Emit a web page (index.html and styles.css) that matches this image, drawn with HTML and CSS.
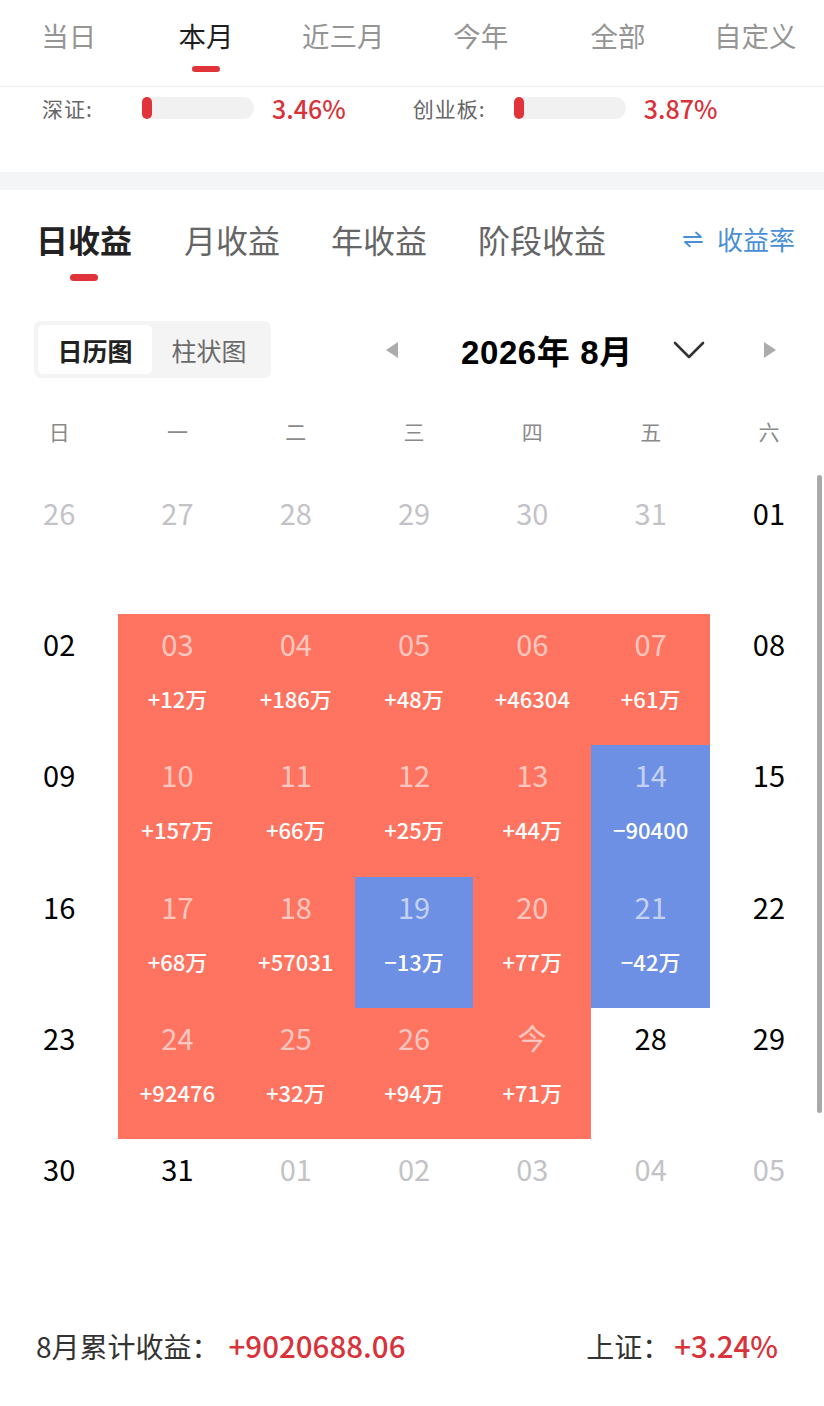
FILE: index.html
```html
<!DOCTYPE html>
<html lang="zh-CN">
<head>
<meta charset="utf-8">
<title>收益日历</title>
<link rel="stylesheet" href="styles.css">
</head>
<body>
<div class="page">
  <nav class="period-tabs">
    <div class="period-tab">当日</div>
    <div class="period-tab active">本月<span class="tab-line"></span></div>
    <div class="period-tab">近三月</div>
    <div class="period-tab">今年</div>
    <div class="period-tab">全部</div>
    <div class="period-tab">自定义</div>
  </nav>

  <div class="index-row">
    <div class="index-item">
      <span class="index-name">深证:</span>
      <span class="index-bar"><span class="index-fill"></span></span>
      <span class="index-val">3.46%</span>
    </div>
    <div class="index-item">
      <span class="index-name">创业板:</span>
      <span class="index-bar"><span class="index-fill"></span></span>
      <span class="index-val">3.87%</span>
    </div>
  </div>

  <div class="band"></div>

  <div class="profit-tabs">
    <div class="profit-tab active">日收益<span class="tab-line wide"></span></div>
    <div class="profit-tab">月收益</div>
    <div class="profit-tab">年收益</div>
    <div class="profit-tab">阶段收益</div>
    <div class="rate-link">
      <svg class="swap-icon" viewBox="0 0 22 16" width="22" height="16">
        <path d="M2 6 H19 L14 1.5" fill="none" stroke="#4a8fd6" stroke-width="1.8" stroke-linecap="round" stroke-linejoin="round"/>
        <path d="M20 11 H3 L8 15.5" fill="none" stroke="#4a8fd6" stroke-width="1.8" stroke-linecap="round" stroke-linejoin="round"/>
      </svg>
      <span>收益率</span>
    </div>
  </div>

  <div class="toolbar">
    <div class="toggle">
      <div class="toggle-item on">日历图</div>
      <div class="toggle-item">柱状图</div>
    </div>
    <div class="month-nav">
      <svg class="tri" viewBox="0 0 14 18" width="14" height="18"><path d="M13 1 L1 9 L13 17 Z" fill="#acacac"/></svg>
      <div class="month-title">2026年 8月</div>
      <svg class="chev" viewBox="0 0 32 20" width="32" height="20"><path d="M2 3 L16 17 L30 3" fill="none" stroke="#333" stroke-width="2.6" stroke-linecap="round" stroke-linejoin="round"/></svg>
      <svg class="tri" viewBox="0 0 14 18" width="14" height="18"><path d="M1 1 L13 9 L1 17 Z" fill="#acacac"/></svg>
    </div>
  </div>

  <div class="calendar">
    <div class="weekdays">
      <span>日</span><span>一</span><span>二</span><span>三</span><span>四</span><span>五</span><span>六</span>
    </div>
    <div class="days">
      <div class="day other"><span class="dn">26</span></div>
      <div class="day other"><span class="dn">27</span></div>
      <div class="day other"><span class="dn">28</span></div>
      <div class="day other"><span class="dn">29</span></div>
      <div class="day other"><span class="dn">30</span></div>
      <div class="day other"><span class="dn">31</span></div>
      <div class="day"><span class="dn">01</span></div>

      <div class="day"><span class="dn">02</span></div>
      <div class="day up"><span class="dn">03</span><span class="dv">+12万</span></div>
      <div class="day up"><span class="dn">04</span><span class="dv">+186万</span></div>
      <div class="day up"><span class="dn">05</span><span class="dv">+48万</span></div>
      <div class="day up"><span class="dn">06</span><span class="dv">+46304</span></div>
      <div class="day up"><span class="dn">07</span><span class="dv">+61万</span></div>
      <div class="day"><span class="dn">08</span></div>

      <div class="day"><span class="dn">09</span></div>
      <div class="day up"><span class="dn">10</span><span class="dv">+157万</span></div>
      <div class="day up"><span class="dn">11</span><span class="dv">+66万</span></div>
      <div class="day up"><span class="dn">12</span><span class="dv">+25万</span></div>
      <div class="day up"><span class="dn">13</span><span class="dv">+44万</span></div>
      <div class="day down"><span class="dn">14</span><span class="dv">−90400</span></div>
      <div class="day"><span class="dn">15</span></div>

      <div class="day"><span class="dn">16</span></div>
      <div class="day up"><span class="dn">17</span><span class="dv">+68万</span></div>
      <div class="day up"><span class="dn">18</span><span class="dv">+57031</span></div>
      <div class="day down"><span class="dn">19</span><span class="dv">−13万</span></div>
      <div class="day up"><span class="dn">20</span><span class="dv">+77万</span></div>
      <div class="day down"><span class="dn">21</span><span class="dv">−42万</span></div>
      <div class="day"><span class="dn">22</span></div>

      <div class="day"><span class="dn">23</span></div>
      <div class="day up"><span class="dn">24</span><span class="dv">+92476</span></div>
      <div class="day up"><span class="dn">25</span><span class="dv">+32万</span></div>
      <div class="day up"><span class="dn">26</span><span class="dv">+94万</span></div>
      <div class="day up"><span class="dn">今</span><span class="dv">+71万</span></div>
      <div class="day"><span class="dn">28</span></div>
      <div class="day"><span class="dn">29</span></div>

      <div class="day"><span class="dn">30</span></div>
      <div class="day"><span class="dn">31</span></div>
      <div class="day other"><span class="dn">01</span></div>
      <div class="day other"><span class="dn">02</span></div>
      <div class="day other"><span class="dn">03</span></div>
      <div class="day other"><span class="dn">04</span></div>
      <div class="day other"><span class="dn">05</span></div>
    </div>
  </div>

  <div class="summary">
    <div class="sum-left"><span class="sum-label">8月累计收益：</span><span class="sum-val">+9020688.06</span></div>
    <div class="sum-right"><span class="sum-label">上证：</span><span class="sum-val">+3.24%</span></div>
  </div>

  <div class="scrollbar"></div>
</div>
</body>
</html>
```

FILE: styles.css
```css
* { box-sizing: border-box; margin: 0; padding: 0; }
html, body {
  width: 824px;
  height: 1406px;
  overflow: hidden;
  background: #fff;
}
body {
  font-family: "Noto Sans CJK SC", "Noto Sans", sans-serif;
  color: #222;
}
.page {
  position: relative;
  width: 824px;
  height: 1406px;
  overflow: hidden;
}

/* period tabs */
.period-tabs {
  display: flex;
  height: 87px;
  border-bottom: 1px solid #ececec;
  padding-top: 15px;
}
.period-tab {
  flex: 1;
  display: flex;
  flex-direction: column;
  align-items: center;
  font-size: 27.5px;
  line-height: 40px;
  color: #959595;
}
.period-tab.active { color: #1f1f1f; }
.tab-line {
  display: block;
  width: 28px;
  height: 6px;
  border-radius: 3px;
  background: #e0343a;
  margin-top: 11px;
}

/* index row */
.index-row {
  display: flex;
  height: 85px;
  padding: 9px 0 0 42px;
}
.index-item {
  display: flex;
  align-items: center;
  height: 24px;
}
.index-item + .index-item { margin-left: 67px; }
.index-name {
  font-size: 21px;
  color: #666;
  width: 100px;
  line-height: 24px;
  letter-spacing: 1px;
}
.index-item + .index-item .index-name { width: 101px; }
.index-bar {
  display: block;
  width: 112px;
  height: 22px;
  border-radius: 11px;
  background: #f1f1f1;
}
.index-fill {
  display: block;
  width: 10px;
  height: 22px;
  border-radius: 5px;
  background: #e0343a;
}
.index-val {
  margin-left: 18px;
  font-size: 25px;
  font-weight: 500;
  color: #d8333b;
  line-height: 24px;
}

.band {
  height: 18px;
  background: #f4f5f7;
}

/* profit tabs */
.profit-tabs {
  display: flex;
  align-items: flex-start;
  padding: 27px 0 0 36px;
  height: 91px;
}
.profit-tab {
  display: flex;
  flex-direction: column;
  align-items: center;
  font-size: 32px;
  line-height: 44px;
  color: #666;
  margin-right: 51px;
}
.profit-tab.active {
  color: #222;
  font-weight: 700;
  margin-right: 52px;
}
.tab-line.wide {
  width: 28px;
  height: 7px;
  border-radius: 4px;
  margin-top: 13px;
}
.rate-link {
  margin-left: auto;
  margin-right: 29px;
  display: flex;
  align-items: center;
  gap: 13px;
  font-size: 26px;
  line-height: 44px;
  color: #4a8fd6;
}
.swap-icon { display: block; }

/* toolbar */
.toolbar {
  display: flex;
  align-items: center;
  margin-top: 40px;
  padding-left: 34px;
  height: 57px;
}
.toggle {
  display: flex;
  width: 237px;
  height: 57px;
  padding: 4px;
  background: #f4f4f4;
  border-radius: 7px;
}
.toggle-item {
  width: 114px;
  height: 49px;
  display: flex;
  align-items: center;
  justify-content: center;
  font-size: 25px;
  color: #6a6a6a;
  border-radius: 5px;
}
.toggle-item.on {
  background: #fff;
  color: #222;
  font-weight: 700;
}
.month-nav {
  display: flex;
  align-items: center;
  margin-left: 114px;
}
.tri { display: block; }
.month-title {
  margin-left: 62px;
  width: 171px;
  font-family: "Liberation Sans", "Noto Sans CJK SC", sans-serif;
  font-weight: 700;
  font-size: 33px;
  color: #000;
  white-space: nowrap;
  letter-spacing: 0.6px;
}
.chev { margin-left: 41px; display: block; }
.month-nav .chev + .tri { margin-left: 58px; }

/* calendar */
.calendar {
  margin-top: 38px;
  width: 828px;
}
.weekdays {
  display: grid;
  grid-template-columns: repeat(7, 118.3px);
  height: 30px;
  line-height: 30px;
  font-size: 21px;
  color: #8a8a8a;
  text-align: center;
}
.days {
  margin-top: 37px;
  display: grid;
  grid-template-columns: repeat(7, 118.3px);
  grid-auto-rows: 131.2px;
}
.day {
  display: flex;
  flex-direction: column;
  align-items: center;
  padding-top: 12px;
  color: #000;
}
.dn {
  font-size: 29px;
  line-height: 34px;
  font-weight: 400;
}
.dv {
  margin-top: 23px;
  font-size: 22px;
  line-height: 30px;
  font-weight: 500;
  color: #fff;
}
.day.other { color: #c3c3c7; }
.day.up { background: #fe7460; }
.day.down { background: #6d8fe4; }
.day.up .dn, .day.down .dn { color: rgba(255, 255, 255, 0.62); }

/* summary */
.summary {
  display: flex;
  justify-content: space-between;
  align-items: center;
  margin-top: 55px;
  padding: 0 46px 0 36px;
  height: 40px;
  font-size: 28px;
}
.sum-label { color: #333; }
.sum-val { color: #d8333b; font-size: 29.5px; font-weight: 500; }
.sum-left .sum-val { margin-left: 9px; }
.sum-right .sum-val { margin-left: 4px; }

.scrollbar {
  position: absolute;
  right: 2px;
  top: 475px;
  width: 5px;
  height: 638px;
  border-radius: 3px;
  background: #a9a9a9;
}
```
